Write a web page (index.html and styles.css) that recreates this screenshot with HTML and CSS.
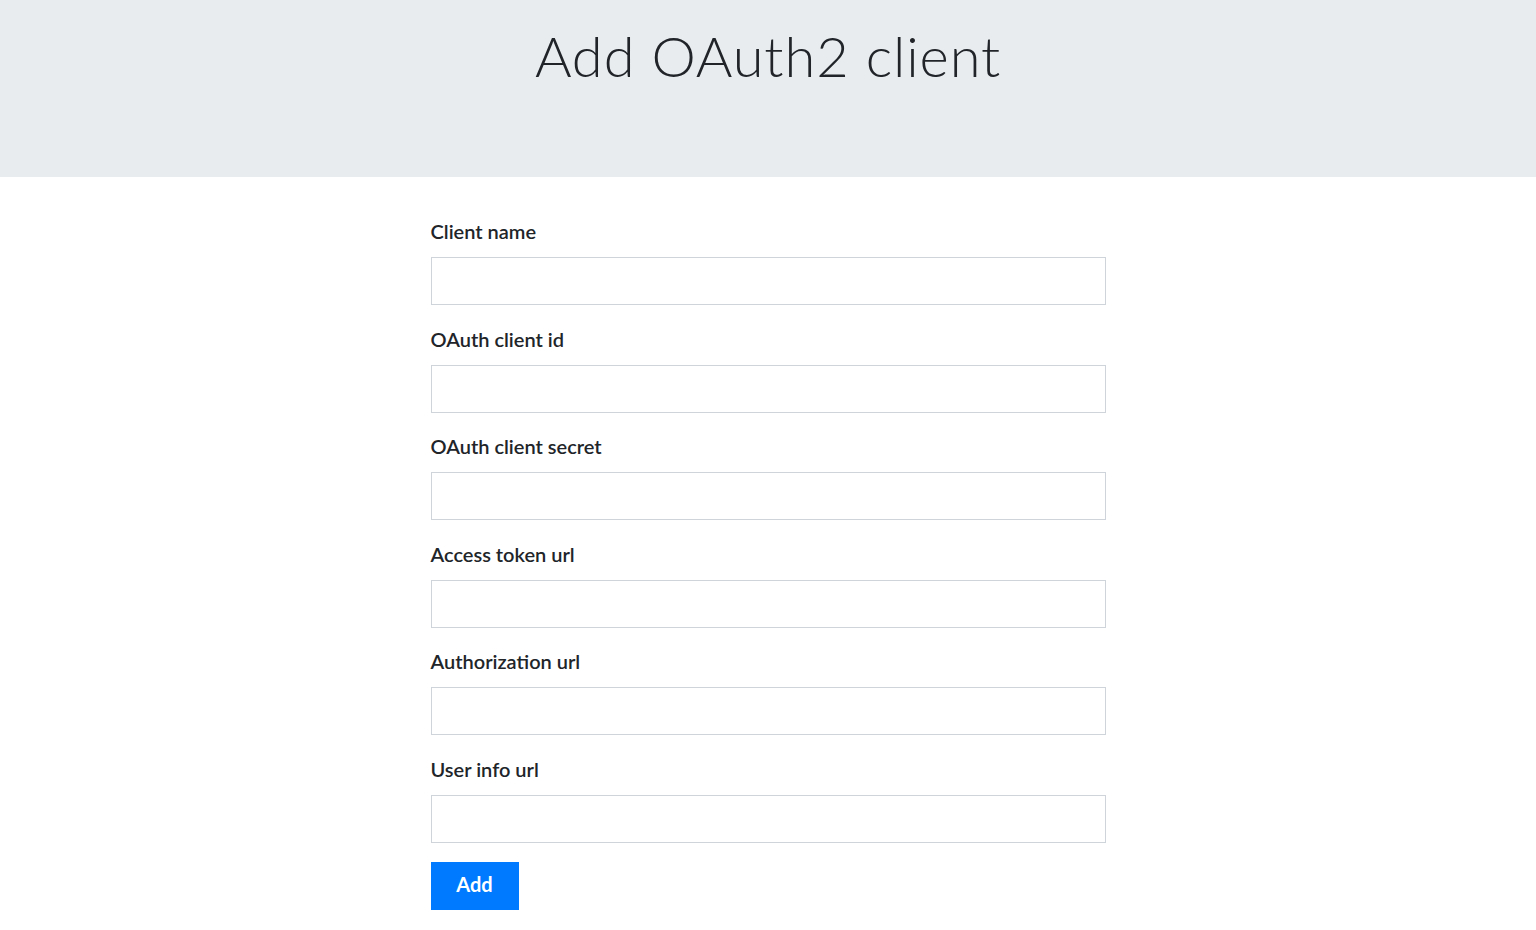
FILE: index.html
```html
<!DOCTYPE html>
<html lang="en">
<head>
<meta charset="utf-8">
<title>Add OAuth2 client</title>
<link rel="stylesheet" href="styles.css">
</head>
<body>
<header class="hero">
  <h1 class="hero-title">Add OAuth2 client</h1>
</header>
<main class="content">
  <form class="client-form">
    <div class="field">
      <label class="field-label" for="name">Client name</label>
      <input class="field-input" id="name" type="text">
    </div>
    <div class="field">
      <label class="field-label" for="cid">OAuth client id</label>
      <input class="field-input" id="cid" type="text">
    </div>
    <div class="field">
      <label class="field-label" for="secret">OAuth client secret</label>
      <input class="field-input" id="secret" type="text">
    </div>
    <div class="field">
      <label class="field-label" for="token">Access token url</label>
      <input class="field-input" id="token" type="text">
    </div>
    <div class="field">
      <label class="field-label" for="auth">Authorization url</label>
      <input class="field-input" id="auth" type="text">
    </div>
    <div class="field">
      <label class="field-label" for="info">User info url</label>
      <input class="field-input" id="info" type="text">
    </div>
    <button class="submit-btn" type="button">Add</button>
  </form>
</main>
</body>
</html>
```
FILE: styles.css
```css
* { box-sizing: border-box; }
html, body { margin: 0; padding: 0; background: #fff; }
body {
  font-family: Lato, "Liberation Sans", sans-serif;
  color: #212529;
}
.hero {
  background: #e9ecef;
  height: 177px;
  display: flex;
  justify-content: center;
  align-items: flex-start;
  padding-top: 22px;
}
.hero-title {
  margin: 0;
  font-family: Lato, "Open Sans", sans-serif;
  font-weight: 300;
  font-size: 56px;
  line-height: 68px;
  letter-spacing: 0.9px;
  color: #212529;
}
.content {
  display: flex;
  justify-content: center;
  padding-top: 39px;
}
.client-form {
  width: 675px;
  display: flex;
  flex-direction: column;
}
.field {
  display: flex;
  flex-direction: column;
  margin-bottom: 18.6px;
}
.field:last-of-type { margin-bottom: 19px; }
.field-label {
  font-size: 20px;
  line-height: 30px;
  font-weight: 600;
  margin-bottom: 11px;
  color: #212529;
}
.field-input {
  height: 48px;
  border: 1px solid #ced4da;
  border-radius: 0;
  padding: 6px 12px;
  font-size: 20px;
  font-family: inherit;
  background: #fff;
}
.submit-btn {
  align-self: flex-start;
  width: 88px;
  height: 48px;
  padding: 0 0 3px;
  background: #007bff;
  color: #fff;
  border: none;
  border-radius: 0;
  font-family: Lato, sans-serif;
  font-weight: 700;
  font-size: 20px;
  cursor: pointer;
}
```
